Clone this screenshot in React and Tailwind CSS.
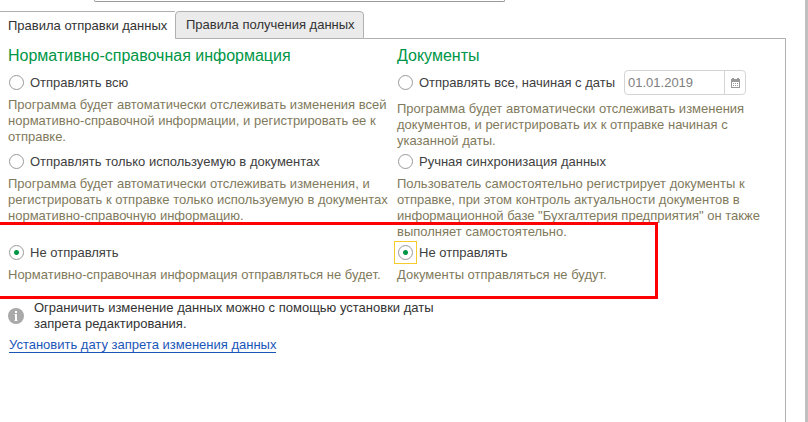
import React, { useState } from 'react';

const referenceOptions = [
  {
    value: 'all',
    label: 'Отправлять всю',
    lines: [
      'Программа будет автоматически отслеживать изменения всей',
      'нормативно-справочной информации, и регистрировать ее к',
      'отправке.',
    ],
  },
  {
    value: 'used',
    label: 'Отправлять только используемую в документах',
    lines: [
      'Программа будет автоматически отслеживать изменения, и',
      'регистрировать к отправке только используемую в документах',
      'нормативно-справочную информацию.',
    ],
  },
  {
    value: 'none',
    label: 'Не отправлять',
    lines: ['Нормативно-справочная информация отправляться не будет.'],
  },
];

const documentOptions = [
  {
    value: 'all',
    label: 'Отправлять все, начиная с даты',
    withDate: true,
    lines: [
      'Программа будет автоматически отслеживать изменения',
      'документов, и регистрировать их к отправке начиная с',
      'указанной даты.',
    ],
  },
  {
    value: 'manual',
    label: 'Ручная синхронизация данных',
    lines: [
      'Пользователь самостоятельно регистрирует документы к',
      'отправке, при этом контроль актуальности документов в',
      'информационной базе "Бухгалтерия предприятия" он также',
      'выполняет самостоятельно.',
    ],
  },
  {
    value: 'none',
    label: 'Не отправлять',
    highlighted: true,
    lines: ['Документы отправляться не будут.'],
  },
];

const CalendarIcon = () => (
  <svg width="9" height="10" viewBox="0 0 9 10" shapeRendering="crispEdges" aria-hidden="true">
    <path d="M0 1h9v9H0z" fill="#999" />
    <path d="M1 4h7v5H1z" fill="#fff" />
    <path d="M1 0h2v2H1zM6 0h2v2H6z" fill="#999" />
    <path
      d="M2 5h1v1H2zM4 5h1v1H4zM6 5h1v1H6zM2 7h1v1H2zM4 7h1v1H4zM6 7h1v1H6z"
      fill="#999"
    />
  </svg>
);

const InfoIcon = () => (
  <svg className="shrink-0" width="16" height="16" viewBox="0 0 16 16" aria-hidden="true">
    <circle cx="8" cy="8" r="8" fill="#a9a9a9" />
    <path d="M7 3h2v2H7zM7 6h2v7H7z" fill="#fff" />
    <path d="M6 6h1v1H6zM6 12h4v1H6z" fill="#fff" fillOpacity="0.4" />
  </svg>
);

const DateField = () => (
  <div className="ml-[9px] flex h-[25px] w-[122px] rounded border border-[#d4d4d4] bg-white">
    <input
      type="text"
      aria-label="Дата начала отправки"
      defaultValue="01.01.2019"
      className="min-w-0 flex-1 pl-[3px] text-[13px] text-[#808080] outline-none"
    />
    <button
      type="button"
      aria-label="Выбрать дату"
      className="flex w-[21px] items-center justify-center border-l border-[#d4d4d4]"
    >
      <CalendarIcon />
    </button>
  </div>
);

const Option = ({ group, option, checked, onChange }) => (
  <div>
    <div className="flex h-[25px] items-center">
      <label className="flex items-center gap-[2px] text-[#404040]">
        <span
          className={`-ml-[3px] flex size-[23px] items-center justify-center border ${
            option.highlighted ? 'border-[#f5cc2c]' : 'border-transparent'
          }`}
        >
          <input
            type="radio"
            name={group}
            value={option.value}
            checked={checked}
            onChange={() => onChange(option.value)}
            className="size-[15px] appearance-none rounded-full border border-[#999] bg-white checked:bg-[radial-gradient(circle,#009646_2px,#fff_3px)]"
          />
        </span>
        <span>{option.label}</span>
      </label>
      {option.withDate && <DateField />}
    </div>
    <p className={`whitespace-nowrap text-[#7f7a5c] ${option.withDate ? 'mt-[6px]' : 'mt-[2px]'}`}>
      {option.lines.map((line) => (
        <span key={line} className="block">{line}</span>
      ))}
    </p>
  </div>
);

const App = () => {
  const [reference, setReference] = useState('none');
  const [documents, setDocuments] = useState('none');

  return (
    <div className="flex min-h-screen flex-col border-r-[3px] border-[#c0c0c0] bg-white pr-[19px] font-['Liberation_Sans',Arial,sans-serif] text-[13px] leading-[16px] text-[#333]">
      <div className="ml-[94px] h-[2px] w-[411px] rounded-b-sm border-x border-b border-[#999]" />

      <div className="mt-[9px] flex h-[28px]" role="tablist">
        <button
          type="button"
          role="tab"
          aria-selected="true"
          className="w-[175px] border-t border-[#b0b0b0] pl-[8px] text-left whitespace-nowrap"
        >
          Правила отправки данных
        </button>
        <button
          type="button"
          role="tab"
          aria-selected="false"
          className="w-[189px] rounded-t-sm border border-[#b0b0b0] bg-[#ebebeb] pl-[10px] text-left whitespace-nowrap"
        >
          Правила получения данных
        </button>
        <div className="flex-1 border-b border-[#b0b0b0]" />
      </div>

      <div className="flex-1 border-r border-[#b0b0b0] pl-[8px]">
        <div className="relative grid grid-cols-[389px_1fr] pt-[7px]">
          <h2 className="mb-[4px] text-[16px] leading-[20px] text-[#009646]">
            Нормативно-справочная информация
          </h2>
          <h2 className="mb-[4px] text-[16px] leading-[20px] text-[#009646]">Документы</h2>

          {referenceOptions.map((option, i) => (
            <React.Fragment key={option.label}>
              <Option
                group="reference"
                option={option}
                checked={reference === option.value}
                onChange={setReference}
              />
              <Option
                group="documents"
                option={documentOptions[i]}
                checked={documents === documentOptions[i].value}
                onChange={setDocuments}
              />
            </React.Fragment>
          ))}

          {/* marker frame over the last pair of options */}
          <div className="pointer-events-none absolute -bottom-[16px] -left-[8px] h-[77px] w-[658px] border-y-[3px] border-r-[3px] border-[#f00]" />
        </div>

        <div className="mt-[17px] flex items-center gap-[10px]">
          <InfoIcon />
          <p>
            Ограничить изменение данных можно с помощью установки даты
            <br />
            запрета редактирования.
          </p>
        </div>
        <a
          href="#"
          className="mt-[6px] ml-[1px] inline-block border-b border-[#1a56b8] leading-[14px] text-[#1a56b8]"
        >
          Установить дату запрета изменения данных
        </a>
      </div>
    </div>
  );
};

export default App;
